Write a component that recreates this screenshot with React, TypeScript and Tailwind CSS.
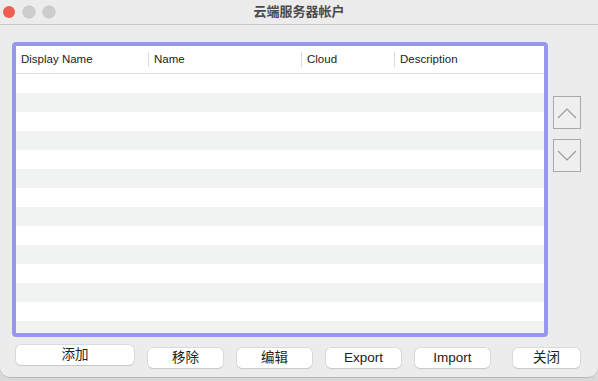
const cn = '"Liberation Sans", "Noto Sans CJK SC", sans-serif';

const columns = [
  { label: "Display Name", width: "w-[133px]" },
  { label: "Name", width: "w-[153px]" },
  { label: "Cloud", width: "w-[93px]" },
  { label: "Description", width: "w-[149px]" },
];

const rows = Array.from({ length: 14 }, (_, i) => i);

function Chevron({ up }: { up: boolean }) {
  return (
    <svg width="20" height="12" viewBox="0 0 20 12" fill="none">
      <polyline
        points={up ? "1,11 10,2 19,11" : "1,1 10,10 19,1"}
        stroke="#9a9a9a"
        strokeWidth="1.2"
      />
    </svg>
  );
}

function Btn({ label, w }: { label: string; w: string }) {
  return (
    <button
      className={
        "h-[20px] rounded-[5px] bg-white text-[13.5px] leading-none text-[#222] shadow-[0_0_0_0.5px_#c8c8c8,0_1px_1px_rgba(0,0,0,0.15)] " +
        w
      }
      style={{ fontFamily: cn }}
    >
      {label}
    </button>
  );
}

export default function App() {
  return (
    <div className="h-[381px] w-[598px] bg-[#d9d9d9]" style={{ fontFamily: cn }}>
      <div className="flex h-[378px] w-[598px] flex-col overflow-hidden rounded-b-[10px] border-b border-[#b8b8b8] bg-[#ececec]">
        {/* title bar */}
        <div className="relative flex h-[25px] shrink-0 items-center border-b border-[#c9c9c9] bg-[#ececec]">
          <div className="flex gap-[8px] pl-[3px]">
            <span className="h-[12px] w-[12px] rounded-full bg-[#ed5f53]" />
            <span className="h-[12px] w-[12px] rounded-full bg-[#cdcdcd] ring-[0.5px] ring-[#bdbdbd]" />
            <span className="h-[12px] w-[12px] rounded-full bg-[#cdcdcd] ring-[0.5px] ring-[#bdbdbd]" />
          </div>
          <div className="absolute inset-x-0 top-0 flex h-[24px] items-center justify-center text-[13px] font-bold text-[#4a4a4a]">
            云端服务器帐户
          </div>
        </div>

        {/* main */}
        <div className="flex pt-[17px]">
          <div className="ml-[12px] h-[295px] w-[536px] overflow-hidden rounded-[4px] border-[4px] border-[#9797ec] bg-white">
            <div className="flex h-[28px] items-center border-b border-[#dedede] text-[11.5px] text-[#222]">
              {columns.map((c, i) => (
                <div key={c.label} className={"flex h-[15px] items-center " + c.width + (i < 3 ? " border-r border-[#dcdcdc]" : "")}>
                  <span className="pl-[5px]">{c.label}</span>
                </div>
              ))}
            </div>
            {rows.map((r) => (
              <div key={r} className={"h-[19px] " + (r % 2 === 0 ? "bg-white" : "bg-[#f1f2f2]")} />
            ))}
          </div>

          <div className="ml-[5px] flex flex-col gap-[10px] pt-[54px]">
            <div className="flex h-[33px] w-[28px] items-center justify-center border border-[#a9a9a9] bg-[#efefef]">
              <Chevron up />
            </div>
            <div className="flex h-[33px] w-[28px] items-center justify-center border border-[#a9a9a9] bg-[#efefef]">
              <Chevron up={false} />
            </div>
          </div>
        </div>

        {/* buttons */}
        <div className="flex pl-[16px] pt-[8px]">
          <Btn label="添加" w="w-[118px]" />
          <div className="ml-[14px]"><Btn label="移除" w="w-[75px]" /></div>
          <div className="ml-[14px]"><Btn label="编辑" w="w-[75px]" /></div>
          <div className="ml-[14px]"><Btn label="Export" w="w-[75px]" /></div>
          <div className="ml-[14px]"><Btn label="Import" w="w-[75px]" /></div>
          <div className="ml-[23px]"><Btn label="关闭" w="w-[67px]" /></div>
        </div>
      </div>
    </div>
  );
}
